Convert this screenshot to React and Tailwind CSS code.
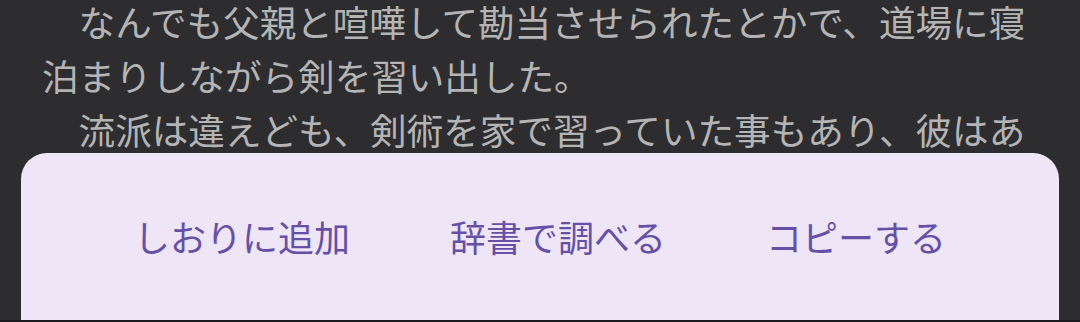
import React from 'react';

const paragraphs = [
    '\u3000なんでも父親と喧嘩して勘当させられたとかで、道場に寝泊まりしながら剣を習い出した。',
    '\u3000流派は違えども、剣術を家で習っていた事もあり、彼はあっという間に腕を上げていった。',
];

const actions = ['しおりに追加', '辞書で調べる', 'コピーする'];

const App = () => {
    return (
        <div
            className="relative w-[1080px] h-[322px] overflow-hidden bg-[#2d2d30]"
            style={{ fontFamily: '"Noto Sans CJK JP", "Noto Sans", sans-serif' }}
        >
            <div className="pl-[42px] pr-[36px] mt-[-5px] text-[36.6px] leading-[54px] text-[#b4b4b4]">
                {paragraphs.map((p, i) => (
                    <p key={i}>{p}</p>
                ))}
            </div>

            {/* selection popup */}
            <div className="absolute left-[21px] top-[153px] w-[1038px] h-[167px] rounded-t-[26px] bg-[#eee6f6] flex items-center justify-center gap-[100px] pb-[2px]">
                {actions.map((label) => (
                    <button
                        key={label}
                        className="text-[36px] leading-none text-[#6650a6]"
                    >
                        {label}
                    </button>
                ))}
            </div>
            <div className="absolute left-0 bottom-0 w-full h-[2px] bg-[#1c1c1e]" />
        </div>
    );
};

export default App;
